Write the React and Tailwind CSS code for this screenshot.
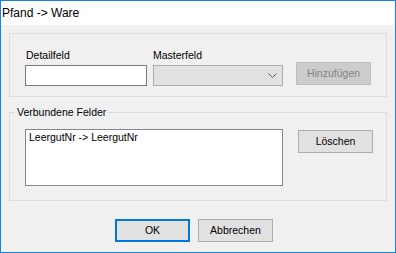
import { useState } from "react";

const font = { fontFamily: '"Liberation Sans", Arial, sans-serif' };

function WinButton({ children, primary, disabled }) {
    return (
        <button
            className={`w-[75px] h-[23px] text-[10.5px] leading-none flex items-center justify-center ${
                primary
                    ? "border-2 border-[#0078d7] bg-[#e1e1e1] text-black"
                    : disabled
                    ? "border border-[#bfbfbf] bg-[#cccccc] text-[#838383]"
                    : "border border-[#adadad] bg-[#e1e1e1] text-black"
            }`}
        >
            {children}
        </button>
    );
}

export default function App() {
    const [detail, setDetail] = useState("");

    return (
        <div
            className="w-[396px] h-[253px] flex flex-col border border-[#1883d7] bg-[#f0f0f0] text-black"
            style={font}
        >
            {/* title bar */}
            <div className="h-[24px] bg-white flex items-center pl-[1px] text-[12px]">
                Pfand -&gt; Ware
            </div>

            <div className="flex-1 flex flex-col px-[8px] pt-[8px]">
                {/* Detailfeld / Masterfeld */}
                <div className="h-[64px] border border-[#dcdcdc] flex items-start pl-[15px] pt-[15px]">
                    <div className="w-[122px] flex flex-col">
                        <span className="text-[10.5px] leading-[13px] pl-[1px] mb-[3px]">Detailfeld</span>
                        <input
                            value={detail}
                            onChange={(e) => setDetail(e.target.value)}
                            className="h-[21px] w-full border border-[#7a7a7a] bg-white outline-none text-[10.5px] px-[2px]"
                        />
                    </div>
                    <div className="w-[130px] ml-[6px] flex flex-col">
                        <span className="text-[10.5px] leading-[13px] mb-[3px]">Masterfeld</span>
                        <div className="h-[21px] w-full border border-[#adadad] bg-[#e1e1e1] flex items-center justify-end pr-[5px]">
                            <svg width="9" height="6" viewBox="0 0 9 6" fill="none">
                                <path d="M0.5 0.5 L4.5 4.5 L8.5 0.5" stroke="#606060" strokeWidth="1" />
                            </svg>
                        </div>
                    </div>
                    <div className="ml-[13px] mt-[13px]">
                        <WinButton disabled>Hinzufügen</WinButton>
                    </div>
                </div>

                {/* Verbundene Felder */}
                <fieldset className="mt-[9px] border border-[#dcdcdc] pb-[14px]">
                    <legend className="ml-[5px] px-[2px] text-[10.5px] leading-[13px]">Verbundene Felder</legend>
                    <div className="flex items-start pl-[15px] pt-[10px]">
                        <div className="w-[258px] h-[57px] border border-[#828790] bg-white text-[10.5px] leading-[13px] px-[3px] pt-[1px]">
                            LeergutNr -&gt; LeergutNr
                        </div>
                        <div className="ml-[15px] mt-[1px]">
                            <WinButton>Löschen</WinButton>
                        </div>
                    </div>
                </fieldset>

                {/* dialog buttons */}
                <div className="flex gap-[8px] pl-[106px] mt-[18px]">
                    <WinButton primary>OK</WinButton>
                    <WinButton>Abbrechen</WinButton>
                </div>
            </div>
        </div>
    );
}
